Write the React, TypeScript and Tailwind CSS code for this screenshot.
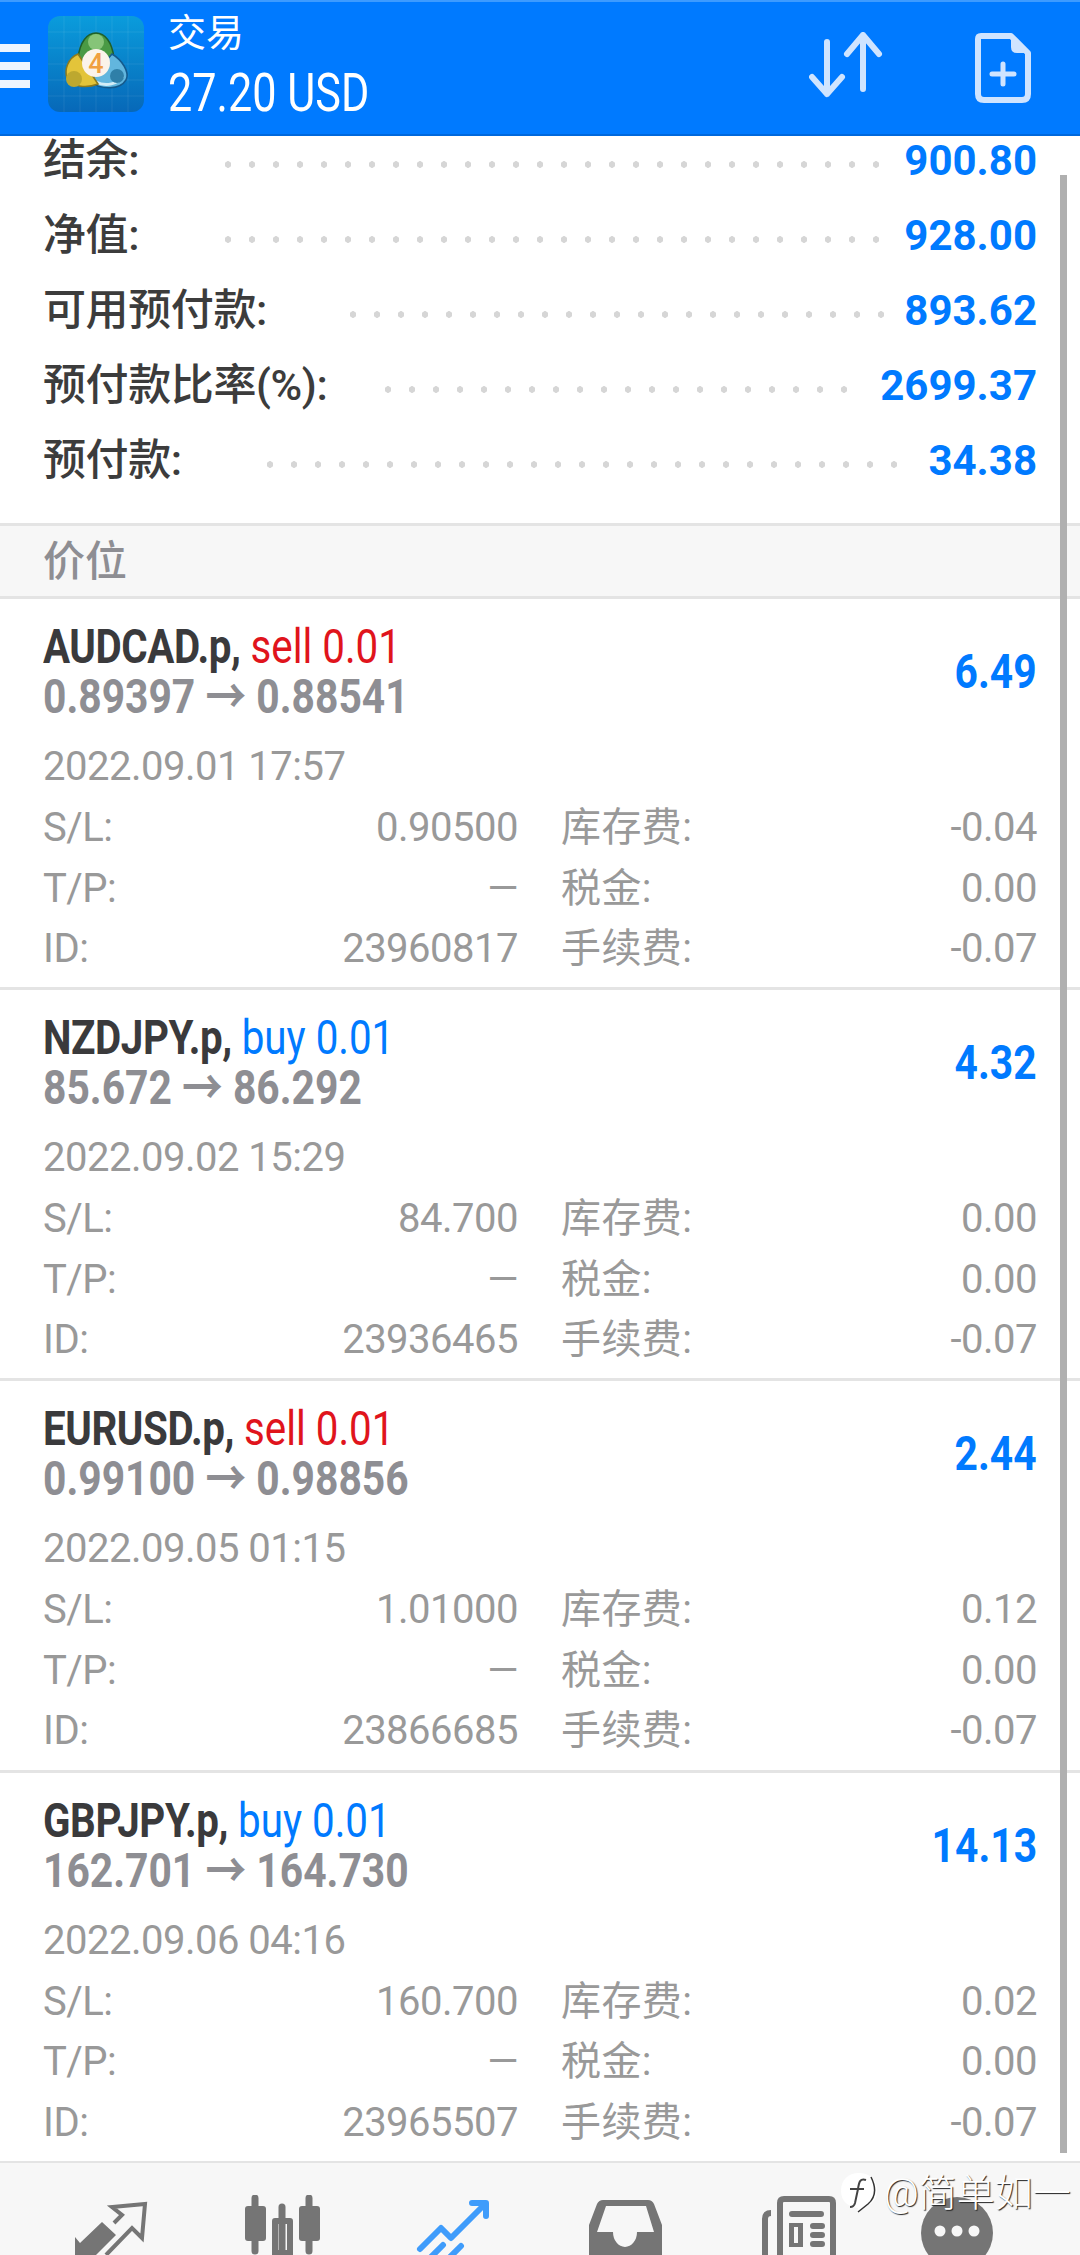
const summary = [
  { label: "结余:", value: "900.80", dots: "ml-[77px]" },
  { label: "净值:", value: "928.00", dots: "ml-[77px]" },
  { label: "可用预付款:", value: "893.62", dots: "ml-[74px]" },
  { label: "预付款比率(%):", value: "2699.37", dots: "ml-[49px]" },
  { label: "预付款:", value: "34.38", dots: "ml-[76px]" },
];

const positions = [
  { symbol: "AUDCAD.p,", side: "sell", prices: "0.89397 → 0.88541", profit: "6.49", time: "2022.09.01 17:57", sl: "0.90500", swap: "-0.04", id: "23960817", tax: "0.00", fee: "-0.07" },
  { symbol: "NZDJPY.p,", side: "buy", prices: "85.672 → 86.292", profit: "4.32", time: "2022.09.02 15:29", sl: "84.700", swap: "0.00", id: "23936465", tax: "0.00", fee: "-0.07" },
  { symbol: "EURUSD.p,", side: "sell", prices: "0.99100 → 0.98856", profit: "2.44", time: "2022.09.05 01:15", sl: "1.01000", swap: "0.12", id: "23866685", tax: "0.00", fee: "-0.07" },
  { symbol: "GBPJPY.p,", side: "buy", prices: "162.701 → 164.730", profit: "14.13", time: "2022.09.06 04:16", sl: "160.700", swap: "0.02", id: "23965507", tax: "0.00", fee: "-0.07" },
];

function Logo() {
  return (
    <svg width="96" height="96" viewBox="0 0 96 96" className="shrink-0">
      <defs>
        <linearGradient id="logoBg" x1="0" y1="0" x2="0" y2="1">
          <stop offset="0" stopColor="#0a9cdc" />
          <stop offset="1" stopColor="#0768b8" />
        </linearGradient>
      </defs>
      <rect width="96" height="96" rx="12" fill="url(#logoBg)" />
      <path d="M16 0V96M32 0V96M48 0V96M64 0V96M80 0V96M0 16H96M0 32H96M0 48H96M0 64H96M0 80H96" stroke="#ffffff" strokeOpacity="0.08" />
      {/* three figures around the 4 */}
      <path d="M48 17C57 17 64 26 66 42L48 50L30 42C32 26 39 17 48 17Z" fill="#4a9a45" stroke="#1f5f2a" strokeWidth="1.5" />
      <circle cx="48" cy="26" r="8" fill="#86c478" />
      <path d="M64 38C74 44 82 56 78 64C72 74 54 74 42 66L52 52Z" fill="#62b6de" stroke="#155a8c" strokeWidth="1.5" />
      <path d="M48 66C58 71 70 68 75 60" fill="none" stroke="#d3edf7" strokeWidth="3" />
      <circle cx="69" cy="60" r="7" fill="#2f7fa8" />
      <path d="M30 38C20 42 16 54 19 62C24 72 40 72 50 68L38 50Z" fill="#e3c43a" stroke="#8d7a1c" strokeWidth="1.5" />
      <circle cx="26" cy="63" r="8" fill="#bda82f" />
      <circle cx="48" cy="47" r="14" fill="#fbf3ea" />
      <text x="48" y="57" textAnchor="middle" fontSize="27" fontWeight="500" fill="#f0a040" fontFamily="Roboto, sans-serif">
        4
      </text>
    </svg>
  );
}

function Header() {
  return (
    <header className="relative z-10 flex h-[136px] shrink-0 items-center border-t-[2px] border-b-[2px] border-t-[#3d9bff] border-b-[#0068dc] bg-[#007aff] text-white">
      {/* hamburger, cut off by the left edge */}
      <div className="mb-[4px] flex w-[30px] shrink-0 flex-col gap-[10px]">
        <div className="h-[8px] bg-[#eef5ff]" />
        <div className="h-[8px] bg-[#eef5ff]" />
        <div className="h-[8px] bg-[#eef5ff]" />
      </div>
      <div className="mb-[8px] ml-[18px]">
        <Logo />
      </div>
      <div className="ml-[24px] flex flex-1 flex-col">
        <div className="text-[38px] leading-[50px]">交易</div>
        <div className="origin-left scale-x-[0.8] text-[54px] leading-[70px]">27.20 USD</div>
      </div>
      <svg width="80" height="72" viewBox="0 0 80 72" fill="none" stroke="#cfe4ff" strokeWidth="6" strokeLinecap="round" strokeLinejoin="round" className="mr-[86px]">
        <path d="M18 10V62M3 45L18 62L33 45" />
        <path d="M54 3V57M38 22L54 3L70 22" />
      </svg>
      <svg width="56" height="70" viewBox="0 0 56 70" className="mr-[49px]">
        <path d="M6 3H36L53 20V61Q53 67 47 67H9Q3 67 3 61V6Q3 3 6 3Z" fill="none" stroke="#cfe4ff" strokeWidth="6" strokeLinejoin="round" />
        <path d="M36 3V14Q36 20 42 20H53Z" fill="#cfe4ff" />
        <path d="M28 31V51M17 41H39" stroke="#cfe4ff" strokeWidth="5" strokeLinecap="round" fill="none" />
      </svg>
    </header>
  );
}

function SummaryRow({ label, value, dots }: { label: string; value: string; dots: string }) {
  return (
    <div className="flex h-[75px] items-center px-[43px]">
      <span className="text-[43px] font-medium tracking-[-0.4px] text-[#3c3c3c]">{label}</span>
      <div className={`${dots} mr-[20px] mt-[8px] h-[9px] flex-1 bg-[radial-gradient(circle,#d6d6d6_3px,transparent_3.5px)] bg-[length:24px_9px] bg-repeat-x`} />
      <span className="text-[42px] font-bold text-[#007aff]">{value}</span>
    </div>
  );
}

function PositionCard({ p }: { p: (typeof positions)[number] }) {
  const cells = [
    { a: "S/L:", b: p.sl, c: "库存费:", d: p.swap },
    { a: "T/P:", b: "—", c: "税金:", d: p.tax },
    { a: "ID:", b: p.id, c: "手续费:", d: p.fee },
  ];
  return (
    <section className="box-border h-[391.2px] shrink-0 border-b-[3px] border-[#e4e4e4] px-[43px] pt-[23px]">
      <div className="flex">
        <div className="flex-1">
          <div className="origin-left scale-x-[0.84] text-[48px] leading-[50px]">
            <span className="font-bold tracking-[-0.5px] text-[#3a3a3c]">{p.symbol}</span>{" "}
            <span className={p.side === "sell" ? "text-[#e0141c]" : "text-[#007aff]"}>{p.side} 0.01</span>
          </div>
          <div className="origin-left scale-x-[0.85] text-[48px] font-bold leading-[50px] text-[#8e8e93]">{p.prices}</div>
        </div>
        <div className="mt-[25px] origin-right scale-x-[0.85] self-start text-[48px] font-bold leading-[50px] text-[#007aff]">{p.profit}</div>
      </div>
      <div className="mt-[15px] text-[40px] leading-[60px] tracking-[-0.5px] text-[#999999]">{p.time}</div>
      <div className="mt-[1px] text-[40px] leading-[60.5px] tracking-[-0.5px] text-[#999999]">
        {cells.map((c) => (
          <div key={c.a} className="flex">
            <div className="flex w-[475px] shrink-0 justify-between">
              <span>{c.a}</span>
              <span>{c.b}</span>
            </div>
            <div className="ml-[43px] flex flex-1 justify-between">
              <span className="tracking-[0.4px]">{c.c}</span>
              <span>{c.d}</span>
            </div>
          </div>
        ))}
      </div>
    </section>
  );
}

function NavBar() {
  const gray = "#757575";
  return (
    <nav className="flex h-[92px] shrink-0 items-start gap-[92px] overflow-hidden bg-[#f7f7f7] pl-[70px] pt-[32px]">
      <svg width="80" height="80" viewBox="0 0 80 80" className="shrink-0">
        <path d="M44 28L52 20L42 12L75 9L72 43L62 33L36 60" fill="none" stroke={gray} strokeWidth="4" />
        <path d="M32 27L46 40L26 60L30 80H5V42L10 48Z" fill={gray} />
      </svg>
      <svg width="80" height="80" viewBox="0 0 80 80" className="shrink-0">
        <path d="M13 3V56M67 3V56M40 12V72" stroke={gray} strokeWidth="7" strokeLinecap="round" />
        <rect x="3" y="11" width="21" height="35" rx="3" fill={gray} />
        <rect x="57" y="11" width="21" height="35" rx="3" fill={gray} />
        <path fillRule="evenodd" d="M33 23H48Q51 23 51 26V62Q51 65 48 65H33Q30 65 30 62V26Q30 23 33 23ZM36 29V55H45V29Z" fill={gray} />
      </svg>
      <svg width="80" height="80" viewBox="0 0 80 80" fill="none" stroke="#3f9cfb" strokeWidth="6" strokeLinecap="round" strokeLinejoin="round" className="shrink-0">
        <path d="M6 54L27 33L37 43L71 9M58 8H72V21" />
        <path d="M29 50L12 67M47 51L30 68" />
      </svg>
      <svg width="80" height="80" viewBox="0 0 80 80" className="shrink-0">
        <path fillRule="evenodd" d="M17 5H62Q66 5 68 9L76 30V80H3V30L11 9Q13 5 17 5ZM20 11L11 37H27A12 15 0 0 0 51 37H68L60 11Z" fill={gray} />
      </svg>
      <svg width="80" height="80" viewBox="0 0 80 80" className="shrink-0">
        <path d="M13 18Q7 18 7 24V80M22 80V8Q22 4 26 4H71Q75 4 75 8V80" fill="none" stroke={gray} strokeWidth="6" />
        <path d="M34 19H63M55 31H64M55 40H64M55 49H64" stroke={gray} strokeWidth="6" strokeLinecap="round" />
        <path fillRule="evenodd" d="M31 28H45V52H31ZM36 32V48H40V32Z" fill={gray} />
      </svg>
      <svg width="80" height="80" viewBox="0 0 80 80" className="-ml-[13px] shrink-0">
        <circle cx="40" cy="38" r="36" fill={gray} />
        <circle cx="23" cy="36" r="5.5" fill="#f7f7f7" />
        <circle cx="40" cy="36" r="5.5" fill="#f7f7f7" />
        <circle cx="57" cy="36" r="5.5" fill="#f7f7f7" />
      </svg>
    </nav>
  );
}

function Watermark() {
  return (
    <div className="absolute left-[840px] top-[2170px] flex items-center gap-[6px] text-[38px] font-light leading-[46px] text-white [text-shadow:1px_1px_1px_#222]">
      <svg width="38" height="44" viewBox="0 0 38 44">
        <path d="M19 2C30 2 37 9 37 20C37 30 30 34 24 36L17 42L18 37C8 36 1 30 1 20C1 9 8 2 19 2Z" fill="#ffffff" />
        <path d="M31 6C36 16 36 26 28 33L18 41" fill="none" stroke="#333333" strokeWidth="1.5" />
        <path d="M26 9C20 7 19 11 18 18L15 32Q14 36 10 36M10 18H24" fill="none" stroke="#444444" strokeWidth="2" />
      </svg>
      <span>@简单如一</span>
    </div>
  );
}

export default function App() {
  return (
    <div className="relative flex h-[2255px] w-[1080px] flex-col overflow-hidden bg-white font-['Roboto','Noto_Sans_CJK_SC',sans-serif]">
      <Header />
      <main className="flex min-h-0 flex-1 flex-col">
        <div className="-mt-[13px] pb-[25px]">
          {summary.map((row) => (
            <SummaryRow key={row.label} {...row} />
          ))}
        </div>
        <div className="box-border flex h-[76px] shrink-0 items-center border-y-[3px] border-[#e4e4e4] bg-[#f7f7f7] px-[43px] text-[42px] font-medium text-[#8e8e93]">
          价位
        </div>
        {positions.map((p) => (
          <PositionCard key={p.id} p={p} />
        ))}
      </main>
      <NavBar />
      {/* scrollbar sits on top of the list */}
      <div className="absolute left-[1060px] top-[175px] h-[1978px] w-[7px] bg-[#b0b0b0]" />
      <Watermark />
    </div>
  );
}
